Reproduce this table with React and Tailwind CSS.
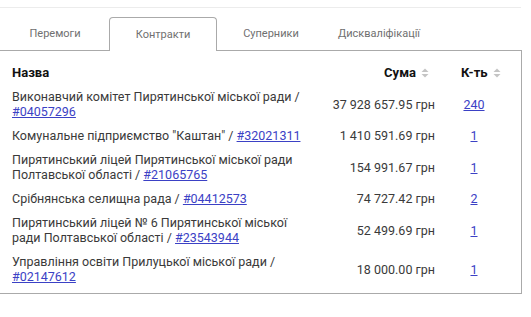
import React from 'react'

const rows = [
  { name: 'Виконавчий комітет Пирятинської міської ради /', code: '#04057296', sum: '37 928 657.95 грн', count: '240' },
  { name: 'Комунальне підприємство "Каштан" /', code: '#32021311', sum: '1 410 591.69 грн', count: '1' },
  { name: 'Пирятинський ліцей Пирятинської міської ради Полтавської області /', code: '#21065765', sum: '154 991.67 грн', count: '1' },
  { name: 'Срібнянська селищна рада /', code: '#04412573', sum: '74 727.42 грн', count: '2' },
  { name: 'Пирятинський ліцей № 6 Пирятинської міської ради Полтавської області /', code: '#23543944', sum: '52 499.69 грн', count: '1' },
  { name: 'Управління освіти Прилуцької міської ради /', code: '#02147612', sum: '18 000.00 грн', count: '1' },
]

const tabs = ['Перемоги', 'Контракти', 'Суперники', 'Дискваліфікації']

const SortIcon = () => (
  <svg width="8" height="10" viewBox="0 0 8 10" className="ml-[5px]">
    <path d="M4 0.5 L7.5 4 H0.5 Z" fill="#c4c4c4" />
    <path d="M4 9.5 L7.5 6 H0.5 Z" fill="#c4c4c4" />
  </svg>
)

const App = () => {
  return (
    <div className="w-[531px] h-[317px] bg-white overflow-hidden text-[#3a3a3a]" style={{ fontFamily: 'Roboto, "Noto Sans", sans-serif' }}>
      <div className="pt-[7px]">
        <div className="w-[521px] border-t border-[#ececec]" />
      </div>

      <div className="w-[522px] pt-[9px]">
        <div className="flex pl-[1px] h-[33px] items-end">
          {tabs.map((t, i) => (
            <div
              key={t}
              className={`w-[108px] h-[33px] flex items-center justify-center pt-[1px] text-[11px] text-[#707070] ${
                i === 1 ? 'border border-b-0 border-[#aaa] rounded-t-[4px] bg-white relative z-10 -mb-px h-[34px]' : ''
              }`}
            >
              {t}
            </div>
          ))}
        </div>

        <div className="border-t border-r border-b border-[#aaa] pt-[13px] pb-[9px]">
          <div className="flex items-center h-[18px] text-[13px] font-bold text-[#111]">
            <div className="w-[316px] pl-[12px]">Назва</div>
            <div className="flex-1 flex items-center justify-end pr-[6px]">
              Сума
              <SortIcon />
            </div>
            <div className="w-[86px] flex items-center pl-[26px]">
              К-ть
              <SortIcon />
            </div>
          </div>

          <div className="mt-[7px] flex flex-col gap-[9px] text-[12.5px] leading-[15px]">
            {rows.map((r) => (
              <div key={r.code} className="flex items-center">
                <div className="w-[316px] pl-[12px] pr-[4px]">
                  {r.name}{' '}
                  <a href="#" className="text-[#3b41c5] underline">{r.code}</a>
                </div>
                <div className="flex-1 text-right">{r.sum}</div>
                <div className="w-[86px] pr-[8px] text-center">
                  <a href="#" className="text-[#3b41c5] underline">{r.count}</a>
                </div>
              </div>
            ))}
          </div>
        </div>
      </div>
    </div>
  )
}

export default App
